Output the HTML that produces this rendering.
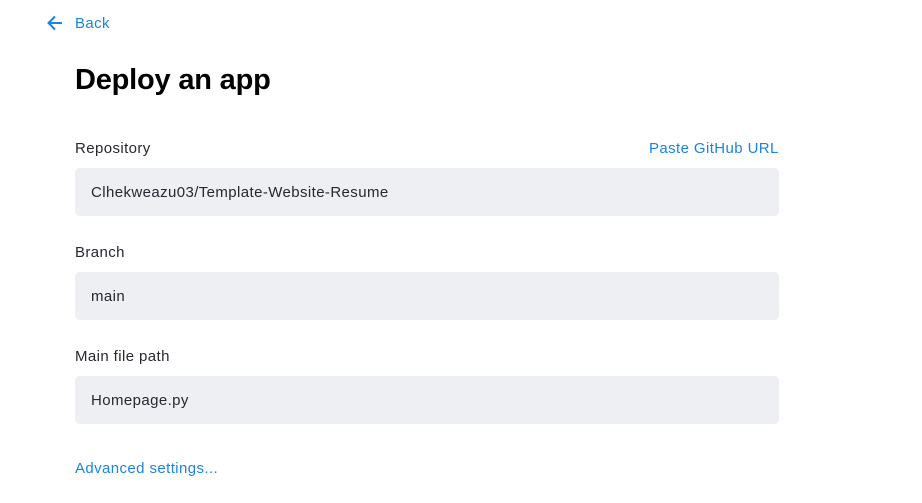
<!DOCTYPE html>
<html><head><style>
body{margin:0;width:922px;height:503px;background:#fff;font-family:"Liberation Sans",sans-serif;position:relative;overflow:hidden}
.a{position:absolute}
.blue{color:#1c83e1}
.lab{font-size:15px;color:#262730;letter-spacing:0.4px}
.blue,.inp{letter-spacing:0.4px}
.inp{position:absolute;left:75px;width:704px;height:48px;background:#eeeff3;border-radius:5px;font-size:15px;color:#262730;line-height:48px;box-sizing:border-box;padding-left:16px}
</style></head><body>
<svg class="a" style="left:45px;top:13px" width="20" height="20" viewBox="0 0 20 20"><path d="M17 10H4M10 3.5L3.5 10 10 16.5" stroke="#1c83e1" stroke-width="2" fill="none"/></svg>
<div class="a blue" style="left:75px;top:15px;font-size:15px">Back</div>
<div class="a" style="left:75px;top:64px;font-size:29px;font-weight:bold;color:#000;letter-spacing:-0.2px">Deploy an app</div>
<div class="a lab" style="left:75px;top:140px">Repository</div>
<div class="a blue" style="left:649px;top:140px;font-size:15px">Paste GitHub URL</div>
<div class="inp" style="top:168px;line-height:50px">Clhekweazu03/Template-Website-Resume</div>
<div class="a lab" style="left:75px;top:244px">Branch</div>
<div class="inp" style="top:272px;line-height:50px">main</div>
<div class="a lab" style="left:75px;top:348px">Main file path</div>
<div class="inp" style="top:376px;line-height:50px">Homepage.py</div>
<div class="a blue" style="left:75px;top:460px;font-size:15px">Advanced settings...</div>
</body></html>
